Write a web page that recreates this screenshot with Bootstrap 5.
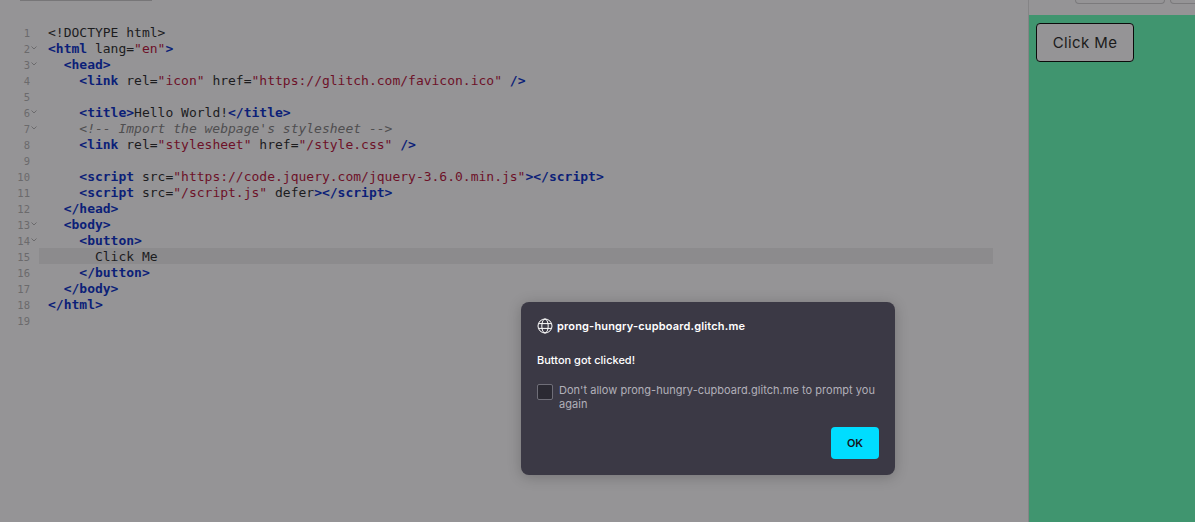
<!DOCTYPE html>
<html lang="en">
<head>
<meta charset="utf-8">
<title>Click Me</title>
<link href="https://cdn.jsdelivr.net/npm/bootstrap@5.3.0/dist/css/bootstrap.min.css" rel="stylesheet">
<style>
html,body{height:522px;overflow:hidden}
body{background:#959496;position:relative}
.page-wrap{height:522px}
.editor-pane{width:1028px;flex:none;position:relative;padding-top:24px}
.top-tab{position:absolute;left:20px;top:0;width:132px;height:1px;background:#777678}
.code-line{display:flex;height:16px;line-height:18px;font-family:"DejaVu Sans Mono",monospace;font-size:13px;color:#1c1c1e;white-space:pre}
.gutter{width:39px;flex:none;position:relative;font-size:10.5px;color:#6b6a6c;text-align:right;padding-right:9px}
.fold{position:absolute;left:31px;top:6px;width:6px;height:4px}
.code-text{padding-left:9px;flex:none;width:954px}
.active-line .code-text{background:#8c8b8d}
.tg{color:#0c1f78;font-weight:700}
.st{color:#6d1128}
.cm{color:#4f4e50;font-style:italic}
.preview-pane{flex:1;border-left:1px solid #858486;display:flex;flex-direction:column}
.preview-top{height:15px;flex:none;display:flex;gap:5px;padding-left:46px;overflow:hidden}
.mini-btn{height:4px;width:90px;flex:none;border:1px solid #7b7a7c;border-top:0;border-radius:0 0 5px 5px}
.mini-btn-b{width:40px}
.preview-body{flex:1;background:#40956f;padding:8px 7px}
.click-btn{display:block;width:98px;height:39px;padding:0;background:#959496;border:1px solid #0b0b0b;border-radius:4px;color:#1b1b1b;font-family:Inter,sans-serif;font-size:15px;line-height:1;letter-spacing:.4px}
.alert-box{position:absolute;left:521px;top:302px;width:374px;height:173px;background:#3b3945;border-radius:8px;box-shadow:0 2px 14px rgba(0,0,0,.22);color:#fff;font-family:Inter,sans-serif;padding:16px}
.alert-head{display:flex;align-items:center;gap:4px;font-size:11px;font-weight:600;height:16px;margin-bottom:18px;line-height:16px;letter-spacing:.16px}
.alert-msg{font-size:11px;font-weight:500;line-height:16px;margin-bottom:16px}
.alert-check{display:flex;gap:6px;font-size:11px;line-height:14px;color:#b2b0b9;letter-spacing:.03px}
.alert-check-text{margin-top:-1px}
.box-check{width:16px;height:16px;flex:none;background:#2b2a33;border:1px solid #6f6e78;border-radius:2px}
.ok-btn{position:absolute;right:16px;bottom:16px;width:48px;height:32px;padding:0;border:0;border-radius:4px;background:#00ddff;color:#15141a;font-size:11px;font-weight:600}
</style>
</head>
<body>
<div class="d-flex page-wrap">
  <div class="editor-pane">
    <div class="top-tab"></div>
    <div class="code-line"><span class="gutter">1</span><span class="code-text">&lt;!DOCTYPE html&gt;</span></div>
    <div class="code-line"><span class="gutter">2<svg class="fold" viewBox="0 0 6 4"><path d="M.5.5 3 3 5.5.5" fill="none" stroke="#6b6a6c"/></svg></span><span class="code-text"><span class="tg">&lt;html</span> lang=<span class="st">"en"</span><span class="tg">&gt;</span></span></div>
    <div class="code-line"><span class="gutter">3<svg class="fold" viewBox="0 0 6 4"><path d="M.5.5 3 3 5.5.5" fill="none" stroke="#6b6a6c"/></svg></span><span class="code-text">  <span class="tg">&lt;head&gt;</span></span></div>
    <div class="code-line"><span class="gutter">4</span><span class="code-text">    <span class="tg">&lt;link</span> rel=<span class="st">"icon"</span> href=<span class="st">"https://glitch.com/favicon.ico"</span> <span class="tg">/&gt;</span></span></div>
    <div class="code-line"><span class="gutter">5</span><span class="code-text"></span></div>
    <div class="code-line"><span class="gutter">6<svg class="fold" viewBox="0 0 6 4"><path d="M.5.5 3 3 5.5.5" fill="none" stroke="#6b6a6c"/></svg></span><span class="code-text">    <span class="tg">&lt;title&gt;</span>Hello World!<span class="tg">&lt;/title&gt;</span></span></div>
    <div class="code-line"><span class="gutter">7<svg class="fold" viewBox="0 0 6 4"><path d="M.5.5 3 3 5.5.5" fill="none" stroke="#6b6a6c"/></svg></span><span class="code-text">    <span class="cm">&lt;!-- Import the webpage's stylesheet --&gt;</span></span></div>
    <div class="code-line"><span class="gutter">8</span><span class="code-text">    <span class="tg">&lt;link</span> rel=<span class="st">"stylesheet"</span> href=<span class="st">"/style.css"</span> <span class="tg">/&gt;</span></span></div>
    <div class="code-line"><span class="gutter">9</span><span class="code-text"></span></div>
    <div class="code-line"><span class="gutter">10</span><span class="code-text">    <span class="tg">&lt;script</span> src=<span class="st">"https://code.jquery.com/jquery-3.6.0.min.js"</span><span class="tg">&gt;&lt;/script&gt;</span></span></div>
    <div class="code-line"><span class="gutter">11</span><span class="code-text">    <span class="tg">&lt;script</span> src=<span class="st">"/script.js"</span> defer<span class="tg">&gt;&lt;/script&gt;</span></span></div>
    <div class="code-line"><span class="gutter">12</span><span class="code-text">  <span class="tg">&lt;/head&gt;</span></span></div>
    <div class="code-line"><span class="gutter">13<svg class="fold" viewBox="0 0 6 4"><path d="M.5.5 3 3 5.5.5" fill="none" stroke="#6b6a6c"/></svg></span><span class="code-text">  <span class="tg">&lt;body&gt;</span></span></div>
    <div class="code-line"><span class="gutter">14<svg class="fold" viewBox="0 0 6 4"><path d="M.5.5 3 3 5.5.5" fill="none" stroke="#6b6a6c"/></svg></span><span class="code-text">    <span class="tg">&lt;button&gt;</span></span></div>
    <div class="code-line active-line"><span class="gutter">15</span><span class="code-text">      Click Me</span></div>
    <div class="code-line"><span class="gutter">16</span><span class="code-text">    <span class="tg">&lt;/button&gt;</span></span></div>
    <div class="code-line"><span class="gutter">17</span><span class="code-text">  <span class="tg">&lt;/body&gt;</span></span></div>
    <div class="code-line"><span class="gutter">18</span><span class="code-text"><span class="tg">&lt;/html&gt;</span></span></div>
    <div class="code-line"><span class="gutter">19</span><span class="code-text"></span></div>
  </div>
  <div class="preview-pane">
    <div class="preview-top"><div class="mini-btn"></div><div class="mini-btn mini-btn-b"></div></div>
    <div class="preview-body"><button class="click-btn" type="button">Click Me</button></div>
  </div>
</div>
<div class="alert-box">
  <div class="alert-head">
    <svg width="16" height="16" viewBox="0 0 16 16" fill="none" stroke="#fff" stroke-width="1"><circle cx="8" cy="8" r="7"/><ellipse cx="8" cy="8" rx="3.2" ry="7"/><path d="M1.5 5.6h13M1.5 10.4h13"/></svg>
    <span>prong-hungry-cupboard.glitch.me</span>
  </div>
  <div class="alert-msg">Button got clicked!</div>
  <div class="alert-check"><span class="box-check"></span><span class="alert-check-text">Don't allow prong-hungry-cupboard.glitch.me to prompt you again</span></div>
  <button class="ok-btn" type="button">OK</button>
</div>
<script src="https://cdn.jsdelivr.net/npm/bootstrap@5.3.0/dist/js/bootstrap.bundle.min.js"></script>
</body>
</html>
